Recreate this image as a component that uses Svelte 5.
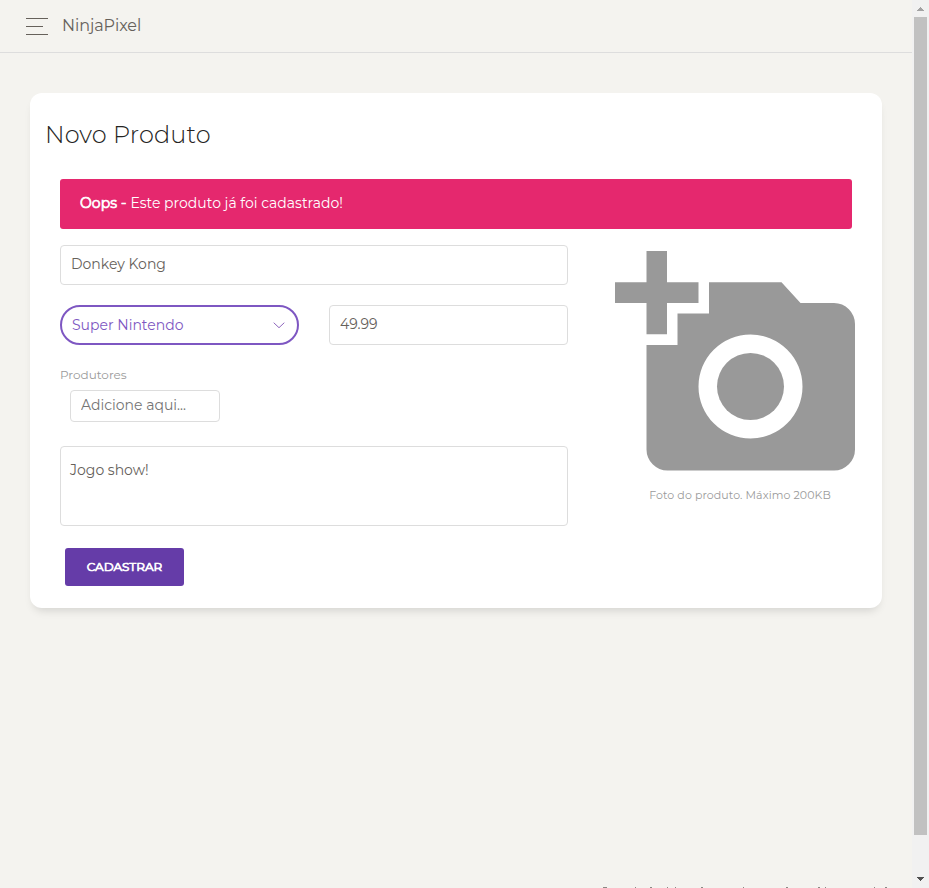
<script>
  const marks = [[603, 4], [635, 1], [650, 2], [667, 1], [675, 1], [701, 2], [743, 1], [786, 2], [818, 2], [825, 1], [874, 1], [885, 2]];
  let name = $state('Donkey Kong');
  let price = $state('49.99');
  let description = $state('Jogo show!');
</script>

<div class="window">
  <main>
    <nav>
      <button class="menu" aria-label="Menu"><i></i><i></i><i></i></button>
      <span class="brand">NinjaPixel</span>
    </nav>
    <section class="card">
      <h4><span>Novo Produto</span></h4>
      <div class="alert"><b>Oops -</b><span>Este produto já foi cadastrado!</span></div>
      <div class="columns">
        <form>
          <input class="field name" bind:value={name} />
          <div class="pair">
            <div class="select"><span>Super Nintendo</span>
              <svg width="12" height="7" viewBox="0 0 12 7"><path d="M.7.7 6 5.7 11.3.7" fill="none" stroke="#8d65bd" /></svg>
            </div>
            <input class="field price" bind:value={price} />
          </div>
          <label for="producer"><span>Produtores</span></label>
          <input id="producer" class="field tag" placeholder="Adicione aqui..." />
          <textarea class="field" bind:value={description}></textarea>
          <button class="submit" type="button"><span>CADASTRAR</span></button>
        </form>
        <aside>
          <svg class="photo" width="240" height="220" viewBox="0 0 240 220" fill="#999">
            <path d="M31.500 0H52v31.300h31.500V52H52v31.300H31.500V52H0V31.300h31.500z" />
            <path fill-rule="evenodd" d="M94 31.300h72.500L185.500 52H219a21 21 0 0 1 21 21v125.500a21 21 0 0 1-21 21H52.500a21 21 0 0 1-21-21V94h31V62.500H94zM135.500 83.500a52 52 0 1 0 0 104 52 52 0 0 0 0-104z" />
            <circle cx="135.500" cy="135.500" r="33.500" />
          </svg>
          <p>Foto do produto. Máximo 200KB</p>
        </aside>
      </div>
    </section>
    <svg class="footer" width="912" height="1" viewBox="0 0 912 1" shape-rendering="crispEdges">
      {#each marks as [x, w]}<rect {x} y="0" width={w} height="1" fill="#8b8984" />{/each}
    </svg>
  </main>
  <div class="scrollbar">
    <svg width="7" height="4" viewBox="0 0 7 4" shape-rendering="crispEdges"><path d="M3 0h1v1h1v1h1v1h1v1H0V3h1V2h1V1h1z" fill="#a3a3a3" /></svg>
    <div class="thumb"></div>
    <svg width="7" height="4" viewBox="0 0 7 4" shape-rendering="crispEdges"><path d="M0 0h7v1H6v1H5v1H4v1H3V3H2V2H1V1H0z" fill="#505050" /></svg>
  </div>
</div>

<style>
  :global(body) { margin: 0; overflow: hidden; }
  * { box-sizing: border-box; }
  .window { display: flex; width: 929px; height: 888px; background: #f4f3ef; font: 400 14px/20px Montserrat, Inter, sans-serif; color: #66615b; }
  main { flex: 1; display: flex; flex-direction: column; }
  nav { height: 53px; flex: none; border-bottom: 1px solid #ddd; display: flex; align-items: center; padding: 0 0 2px 26px; }
  .menu { border: 0; background: none; padding: 2px 0 0; width: 22px; height: 19px; display: flex; flex-direction: column; gap: 7px; }
  .menu i { height: 1px; width: 22px; background: #66615b; }
  .menu i:nth-child(2) { width: 17px; }
  .brand { margin: 2px 0 0 14px; font-size: 16px; letter-spacing: -.08px; }
  .card { margin: 40px 30px 0; width: 852px; height: 515px; background: #fff; border-radius: 12px; box-shadow: 0 6px 10px -4px rgba(0,0,0,.15); padding: 25px 30px 0; }
  h4 { margin: 0 0 0 -15px; font-size: 24px; line-height: 34px; font-weight: 300; letter-spacing: .12px; color: #252422; }
  .alert { margin-top: 27px; height: 50px; border-radius: 3px; background: #e5286e; color: #fff; padding: 14px 20px; display: flex; gap: 4px; }
  .alert b { font-weight: 400; -webkit-text-stroke: .7px #fff; letter-spacing: .1px; }
  .columns { display: flex; justify-content: space-between; padding-top: 16px; }
  form { width: 508px; display: flex; flex-direction: column; }
  .field { display: block; border: 1px solid #ddd; border-radius: 4px; background: #fff; height: 40px; width: 100%; padding: 0 10px 2px; font: inherit; color: #66615b; outline: 0; }
  .pair { display: flex; gap: 30px; margin-top: 20px; }
  .pair > * { width: 239px; }
  .select { height: 40px; border: 2px solid #7e57c2; border-radius: 20px; display: flex; align-items: center; justify-content: space-between; padding: 0 12px 0 10px; color: #7e57c2; }
  .select span { padding-bottom: 1px; }
  label { margin-top: 20px; font-size: 12px; line-height: 20px; color: #9a9a9a; }
  .tag { width: 150px; height: 32px; margin: 5px 0 0 10px; }
  .tag::placeholder { color: #757575; opacity: 1; }
  textarea.field { margin-top: 24px; height: 80px; resize: none; padding: 13px 9px; }
  .submit { margin: 22px 0 0 5px; width: 119px; height: 38px; border: 0; border-radius: 3px; background: #653ca8; color: #fff; font: 400 12px Montserrat, Inter, sans-serif; -webkit-text-stroke: .7px #fff; padding: 0 0 1px; }
  aside { width: 240px; margin: 6px -3px 0 0; text-align: center; }
  .photo { display: block; }
  p { margin: 14px 0 0 10px; font-size: 11px; line-height: 20px; letter-spacing: .1px; color: #9a9a9a; }
  .footer { margin-top: auto; display: block; }
  .scrollbar { width: 17px; background: #f1f1f1; display: flex; flex-direction: column; align-items: center; padding: 7px 0; }
  .thumb { width: 13px; height: 818px; margin: 6px 0 42px; background: #c1c1c1; }
</style>
